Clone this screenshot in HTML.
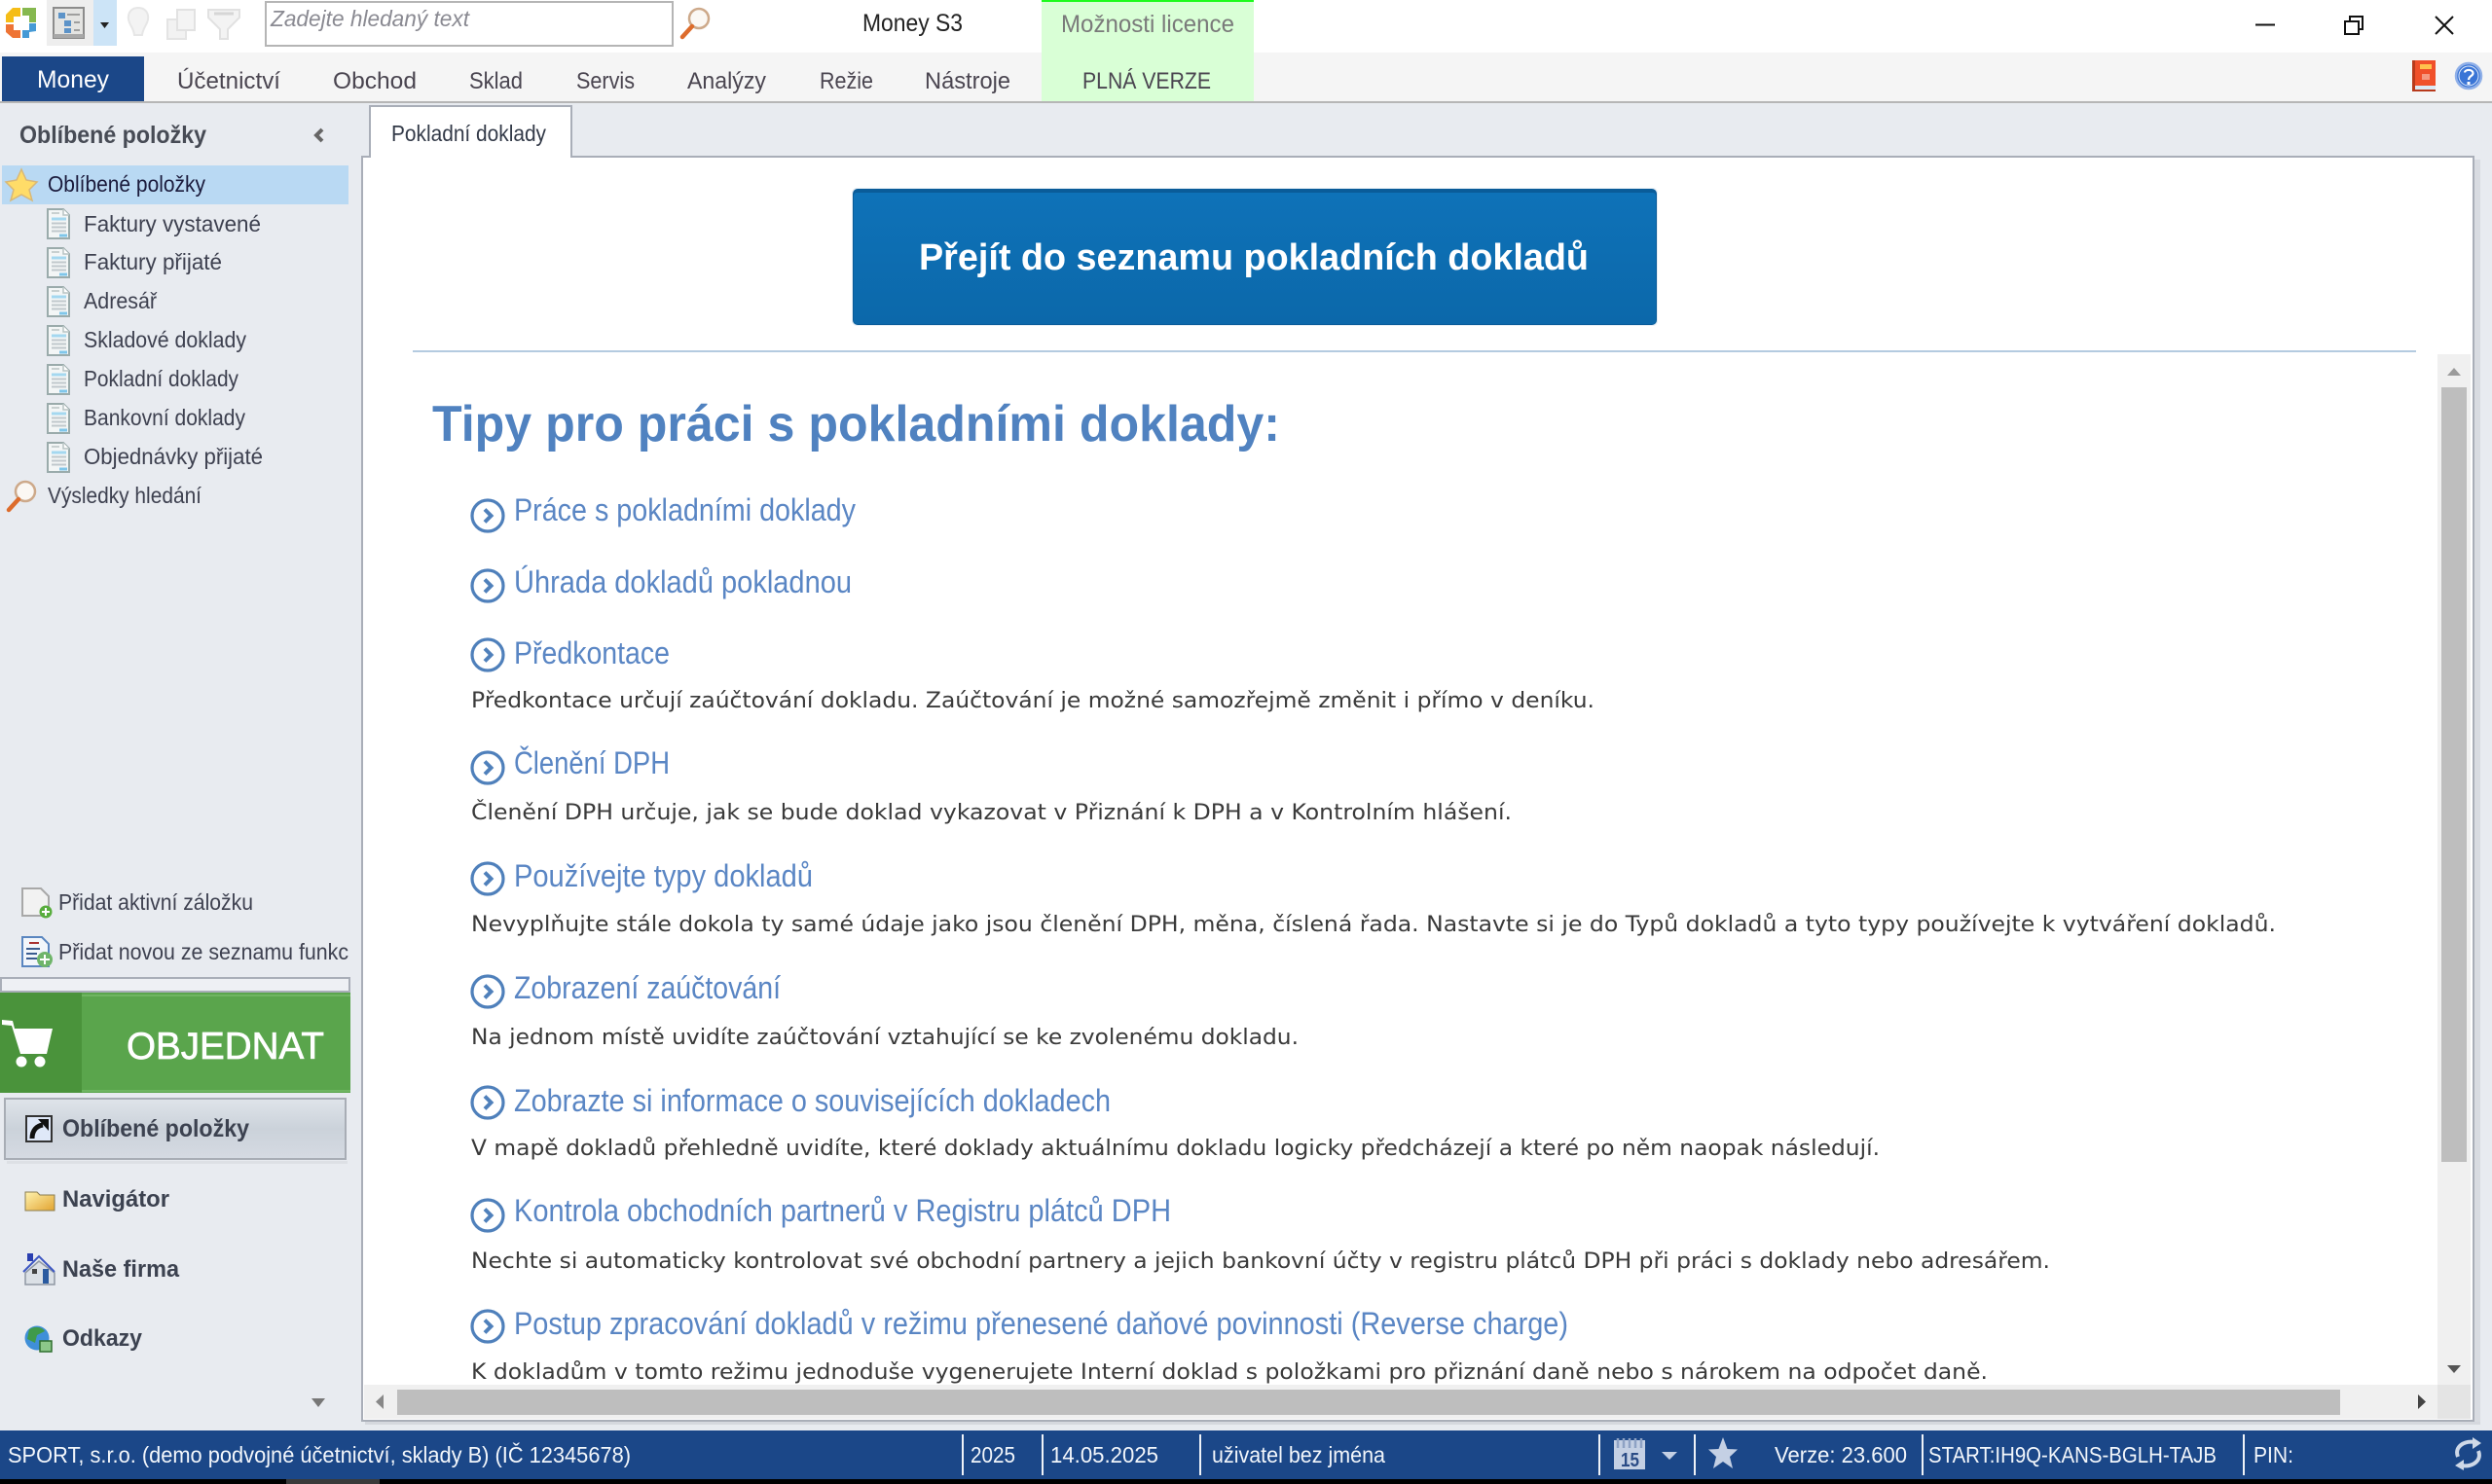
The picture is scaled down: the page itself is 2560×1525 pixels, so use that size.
<!DOCTYPE html>
<html lang="cs">
<head>
<meta charset="utf-8">
<title>Money S3</title>
<style>
html,body{margin:0;padding:0;background:#e8ebf0;width:2560px;height:1525px;overflow:hidden}
svg{display:block}
text{font-family:"Liberation Sans","DejaVu Sans",sans-serif;font-size:23px;fill:#3e4150}
.txt{filter:blur(.35px)}
.b{font-weight:bold}
.m{font-size:24px;fill:#4a4550}
.s{fill:#f2f6fb;font-size:23px}
.l{font-size:32px;fill:#5a86c4}
.d{font-family:"DejaVu Sans","Liberation Sans",sans-serif;font-size:22px;fill:#3a3a3a}
</style>
</head>
<body>
<svg xmlns="http://www.w3.org/2000/svg" width="2560" height="1525" viewBox="0 0 2560 1525">
<defs>
<symbol id="doc" viewBox="0 0 24 32"><path d="M1 1H17L23 7V31H1Z" fill="#f3f6f6" stroke="#9aabab" stroke-width="2"/><path d="M17 1V7H23" fill="#fff" stroke="#b8c4c4" stroke-width="1.5"/><path d="M5 5H13" stroke="#c8d0d0" stroke-width="2"/><path d="M5 11H20" stroke="#a4d8f0" stroke-width="3"/><path d="M5 15.500H20M5 19.500H20M5 23.500H20" stroke="#c0c8cc" stroke-width="2"/><path d="M13 28H21" stroke="#7fc6ea" stroke-width="3"/></symbol>
<symbol id="mag" viewBox="0 0 32 34"><circle cx="20" cy="12" r="10" fill="#fbf8f4" stroke="#cda98a" stroke-width="2.500"/><path d="M13 20L3 31" stroke="#dd6c2c" stroke-width="4.500" stroke-linecap="round"/></symbol>
<g id="go"><circle r="16" fill="#fff" stroke="#4f80bb" stroke-width="3.200"/><path d="M-3-6.500L3.500 0L-3 6.500" fill="none" stroke="#4f80bb" stroke-width="4"/></g>
<linearGradient id="btn" x1="0" y1="0" x2="0" y2="1"><stop offset="0" stop-color="#dfe4ea"/><stop offset=".5" stop-color="#cbd2da"/><stop offset="1" stop-color="#d5dae2"/></linearGradient>
<linearGradient id="fold" x1="0" y1="0" x2="1" y2="1"><stop offset="0" stop-color="#fff3b0"/><stop offset="1" stop-color="#e2a430"/></linearGradient>
<linearGradient id="blue" x1="0" y1="0" x2="0" y2="1"><stop offset="0" stop-color="#0e72b8"/><stop offset="1" stop-color="#0c68aa"/></linearGradient>
<clipPath id="sideclip"><rect x="0" y="950" width="358" height="50"/></clipPath>
</defs>

<!-- base -->
<rect width="2560" height="1525" fill="#e8ebf0"/>
<rect width="2560" height="54" fill="#fff"/>
<rect y="54" width="2560" height="50" fill="#f5f5f5"/>
<rect y="104" width="2560" height="2" fill="#b6b6b6"/>
<rect x="1070" y="0" width="218" height="104" fill="#d9ffd6"/>
<rect x="1070" y="0" width="218" height="2" fill="#1dfb1d"/>
<rect x="2" y="58" width="146" height="46" fill="#1b4788"/>

<!-- toolbar icons -->
<g>
<path d="M6 23H14V17H21V8H13L6 15Z" fill="#f5bd17"/>
<path d="M23 8H37V23H30V16H23Z" fill="#86b84f"/>
<path d="M6 25H14V31H21V39H13L6 33Z" fill="#ee7435"/>
<path d="M30 24H37V32L30 33V39H23V31H30Z" fill="#459ad6"/>
</g>
<rect x="48" y="0" width="48" height="47" fill="#eeeeee"/>
<rect x="96" y="0" width="24" height="47" fill="#cce4f7"/>
<rect x="55" y="8" width="31" height="31" fill="#e4e4e2" stroke="#8c8c8c" stroke-width="2"/>
<rect x="55" y="35" width="31" height="4" fill="#a8a8a8"/>
<g fill="#5c93c8"><rect x="60" y="13" width="7" height="6"/><rect x="66" y="21" width="7" height="6"/><rect x="66" y="29" width="7" height="5"/></g>
<path d="M69 15H82M76 23H82M76 31H82" stroke="#888" stroke-width="1.500"/>
<path d="M103 23H112L107.500 29Z" fill="#222"/>
<g opacity=".85">
<path d="M142 8C135 8 131 13 132 20C133 26 137 28 138 36H146C147 28 151 26 152 20C153 13 149 8 142 8Z" fill="#f2f2f2" stroke="#e2e2e2" stroke-width="2"/>
<rect x="172" y="20" width="19" height="20" fill="#f0f0f0" stroke="#e0e0e0" stroke-width="2"/>
<rect x="182" y="10" width="18" height="21" fill="#f3f3f3" stroke="#dedede" stroke-width="2"/>
<path d="M214 10H246V18L234 30V40H226V30L214 18Z" fill="#f2f2f2" stroke="#dcdcdc" stroke-width="2"/>
<path d="M220 14H240" stroke="#cfcfcf" stroke-width="3"/>
</g>
<rect x="273" y="2" width="418" height="45" fill="#fff" stroke="#b5b5b5" stroke-width="2"/>
<use href="#mag" x="698" y="7" width="32" height="34"/>

<!-- window controls -->
<path d="M2317 25.500H2337" stroke="#111" stroke-width="2"/>
<path d="M2409 22H2423V35H2409Z" fill="none" stroke="#111" stroke-width="2"/>
<path d="M2414 21V17H2427V30H2423" fill="none" stroke="#111" stroke-width="2"/>
<path d="M2502 17L2520 35M2520 17L2502 35" stroke="#111" stroke-width="2"/>
<!-- book / help -->
<rect x="2478" y="62" width="24" height="32" fill="#f0502a"/>
<rect x="2478" y="62" width="3" height="32" fill="#b83a1c"/>
<rect x="2486" y="66" width="12" height="5" fill="#ffc24d"/>
<rect x="2488" y="76" width="8" height="6" fill="#f59a80"/>
<rect x="2481" y="88" width="21" height="4" fill="#dbe9f5"/>
<rect x="2481" y="92" width="21" height="2" fill="#b83a1c"/>
<circle cx="2536" cy="78" r="13" fill="#3a75d6" stroke="#90b0e8" stroke-width="2.500"/>
<circle cx="2536" cy="78" r="10" fill="none" stroke="#dfe9f8" stroke-width="1"/>
<path d="M2532 74.500C2532.500 71 2540 71 2540.500 75C2541 78 2536 78 2536 82" fill="none" stroke="#fff" stroke-width="2.200"/>
<rect x="2534.500" y="84" width="3" height="3" fill="#fff"/>

<!-- tab & content frame -->
<rect x="371" y="160" width="2171" height="1301" fill="#a9aeb8"/>
<rect x="373" y="162" width="2167" height="1297" fill="#fff"/>
<rect x="2542" y="164" width="6" height="1299" fill="#d8dbe1"/>
<rect x="375" y="1461" width="2173" height="3" fill="#d5d8de"/>
<rect x="379" y="108" width="209" height="54" fill="#a9aeb8"/>
<rect x="381" y="110" width="205" height="52" fill="#fff"/>

<!-- blue button -->
<rect x="875" y="193" width="828" height="142" rx="5" fill="#e6eef5"/>
<rect x="876" y="194" width="826" height="140" rx="5" fill="#0a5c99"/>
<rect x="877" y="198" width="824" height="135" rx="3" fill="url(#blue)"/>

<!-- hr -->
<rect x="424" y="360" width="2058" height="2" fill="#b4cbe0"/>

<!-- scrollbars -->
<rect x="2504" y="364" width="34" height="1059" fill="#f0f0f0"/>
<rect x="2508" y="398" width="26" height="796" fill="#bebebe"/>
<path d="M2521 378L2528 386H2514Z" fill="#9b9b9b"/>
<path d="M2514 1403H2528L2521 1411Z" fill="#555"/>
<rect x="374" y="1423" width="2130" height="35" fill="#f0f0f0"/>
<rect x="408" y="1428" width="1996" height="26" fill="#bebebe"/>
<rect x="2504" y="1423" width="34" height="35" fill="#e4e4e4"/>
<path d="M394 1433V1448L386 1440.500Z" fill="#888"/>
<path d="M2484 1433V1448L2492 1440.500Z" fill="#444"/>

<!-- sidebar -->
<path d="M331 133L325 139L331 145" fill="none" stroke="#666" stroke-width="4"/>
<rect x="2" y="170" width="356" height="40" fill="#b9d9f3"/>
<path d="M22 174L27 185L38 187L30 195L33 206L22 200L11 206L14 195L6 187L17 185Z" fill="#ffdc68" stroke="#d8b878" stroke-width="1.500"/>
<use href="#doc" x="48" y="214" width="24" height="32"/>
<use href="#doc" x="48" y="254" width="24" height="32"/>
<use href="#doc" x="48" y="294" width="24" height="32"/>
<use href="#doc" x="48" y="334" width="24" height="32"/>
<use href="#doc" x="48" y="374" width="24" height="32"/>
<use href="#doc" x="48" y="414" width="24" height="32"/>
<use href="#doc" x="48" y="454" width="24" height="32"/>
<use href="#mag" x="6" y="493" width="32" height="34"/>

<!-- add icons -->
<path d="M23 913H42L50 921V941H23Z" fill="#f2f2f2" stroke="#a8a8a8" stroke-width="2"/>
<circle cx="47" cy="937" r="6.500" fill="#58ad3d"/>
<path d="M43 937H51M47 933V941" stroke="#fff" stroke-width="2"/>
<path d="M23 963H43L50 970V993H23Z" fill="#f2f6fb" stroke="#5a86c0" stroke-width="2"/>
<path d="M30 969H40" stroke="#a83030" stroke-width="2"/>
<path d="M27 975H41M27 980H38M27 985H38" stroke="#3a5c90" stroke-width="2"/>
<circle cx="46" cy="986" r="8" fill="#6fb56a"/>
<path d="M41 986H51M46 981V991" stroke="#fff" stroke-width="2"/>

<!-- splitter -->
<rect x="1" y="1005" width="358" height="14" fill="#eef0f4" stroke="#a9aeb8" stroke-width="2"/>

<!-- objednat -->
<rect x="0" y="1020" width="360" height="103" fill="#5aa54c"/>
<rect x="0" y="1020" width="84" height="103" fill="#4a933b"/>
<rect x="84" y="1022" width="276" height="2" fill="#6fb561"/>
<rect x="84" y="1120" width="276" height="2" fill="#6fb561"/>
<path d="M2 1048L13 1049L15 1057H54L48 1083H21L12 1054L2 1053Z" fill="#fff"/>
<circle cx="22" cy="1091" r="5.500" fill="#fff"/>
<circle cx="41" cy="1091" r="5.500" fill="#fff"/>

<!-- nav buttons -->
<rect x="5" y="1129" width="350" height="62" fill="url(#btn)" stroke="#a8adb5" stroke-width="2"/>
<rect x="7" y="1193" width="350" height="3" fill="#dde0e5"/>
<rect x="27" y="1147" width="26" height="26" fill="#dfe8f8" stroke="#333" stroke-width="2"/>
<path d="M33 1170C33 1161 38 1157 44 1156" fill="none" stroke="#111" stroke-width="5"/>
<path d="M39 1150L50 1150L50 1162Z" fill="#111"/>
<path d="M26 1225H38L41 1228H56V1244H26Z" fill="url(#fold)" stroke="#8a7c50" stroke-width="1"/>
<path d="M40 1296L56 1308V1320H26V1308Z" fill="#dbe0e6" stroke="#8f98a4" stroke-width="1.500"/>
<path d="M24 1307L40 1291L56 1307" fill="none" stroke="#3d57c2" stroke-width="2"/>
<rect x="28" y="1288" width="6" height="8" fill="#2a3fb0"/>
<rect x="33" y="1304" width="5" height="5" fill="#444"/>
<rect x="44" y="1304" width="6" height="15" fill="#2a5aa0"/>
<circle cx="38" cy="1375" r="12.500" fill="#3f8fd8"/>
<path d="M30 1366C36 1362 44 1364 46 1368L38 1372L36 1380L28 1376Z" fill="#3f9a4a"/>
<rect x="41" y="1378" width="12" height="11" fill="#8cc78a" stroke="#2e6f2e" stroke-width="1.500"/>
<path d="M320 1437H334L327 1446Z" fill="#777"/>

<!-- status bar -->
<rect y="1470" width="2560" height="50" fill="#1b4788"/>
<rect y="1520" width="2560" height="5" fill="#000"/>
<rect x="294" y="1520" width="96" height="5" fill="#3a3a3a"/>
<g fill="#eef2f8">
<rect x="988" y="1474" width="2" height="42"/><rect x="1070" y="1474" width="2" height="42"/><rect x="1232" y="1474" width="2" height="42"/><rect x="1642" y="1474" width="2" height="42"/><rect x="1740" y="1474" width="2" height="42"/><rect x="1974" y="1474" width="2" height="42"/><rect x="2304" y="1474" width="2" height="42"/>
</g>
<rect x="1658" y="1480" width="32" height="30" fill="#c4d0e4"/>
<path d="M1662 1478V1488M1668 1478V1488M1674 1478V1488M1680 1478V1488M1686 1478V1488" stroke="#8ea2c4" stroke-width="2.500"/>
<path d="M1707 1492H1723L1715 1500Z" fill="#c4d0e4"/>
<path d="M1770 1477L1774.500 1489L1785 1489.500L1777 1497L1780 1509L1770 1502L1760 1509L1763 1497L1755 1489.500L1765.500 1489Z" fill="#c4d0e4"/>
<path d="M2525 1497C2521 1487 2531 1480 2543 1482" fill="none" stroke="#cfd9e8" stroke-width="4"/>
<path d="M2540 1477L2549 1483L2540 1489Z" fill="#cfd9e8"/>
<path d="M2546 1491C2550 1501 2540 1508 2528 1506" fill="none" stroke="#cfd9e8" stroke-width="4"/>
<path d="M2531 1500L2522 1506L2531 1511Z" fill="#cfd9e8"/>

<!-- TEXT -->
<g class="txt">
<text x="278" y="27" textLength="204" lengthAdjust="spacingAndGlyphs" style="font-style:italic;fill:#8a8a92">Zadejte hledaný text</text>
<text x="886" y="32" textLength="103" lengthAdjust="spacingAndGlyphs" style="font-size:25px;fill:#222">Money S3</text>
<text x="1090" y="33" textLength="178" lengthAdjust="spacingAndGlyphs" style="font-size:25px;fill:#7a7a7a">Možnosti licence</text>

<text x="38" y="90" textLength="74" lengthAdjust="spacingAndGlyphs" class="m" style="fill:#fff;font-size:25px">Money</text>
<text x="182" y="91" textLength="106" lengthAdjust="spacingAndGlyphs" class="m">Účetnictví</text>
<text x="342" y="91" textLength="86" lengthAdjust="spacingAndGlyphs" class="m">Obchod</text>
<text x="482" y="91" textLength="55" lengthAdjust="spacingAndGlyphs" class="m">Sklad</text>
<text x="592" y="91" textLength="60" lengthAdjust="spacingAndGlyphs" class="m">Servis</text>
<text x="706" y="91" textLength="81" lengthAdjust="spacingAndGlyphs" class="m">Analýzy</text>
<text x="842" y="91" textLength="55" lengthAdjust="spacingAndGlyphs" class="m">Režie</text>
<text x="950" y="91" textLength="88" lengthAdjust="spacingAndGlyphs" class="m">Nástroje</text>
<text x="1112" y="91" textLength="132" lengthAdjust="spacingAndGlyphs" class="m">PLNÁ VERZE</text>

<text x="20" y="147" textLength="192" lengthAdjust="spacingAndGlyphs" class="b" style="font-size:25px;fill:#474b55">Oblíbené položky</text>
<text x="402" y="145" textLength="159" lengthAdjust="spacingAndGlyphs" style="fill:#333a48">Pokladní doklady</text>

<text x="49" y="197" textLength="162" lengthAdjust="spacingAndGlyphs" style="fill:#1b1b3c">Oblíbené položky</text>
<text x="86" y="238" textLength="182" lengthAdjust="spacingAndGlyphs">Faktury vystavené</text>
<text x="86" y="277" textLength="142" lengthAdjust="spacingAndGlyphs">Faktury přijaté</text>
<text x="86" y="317" textLength="75" lengthAdjust="spacingAndGlyphs">Adresář</text>
<text x="86" y="357" textLength="167" lengthAdjust="spacingAndGlyphs">Skladové doklady</text>
<text x="86" y="397" textLength="159" lengthAdjust="spacingAndGlyphs">Pokladní doklady</text>
<text x="86" y="437" textLength="166" lengthAdjust="spacingAndGlyphs">Bankovní doklady</text>
<text x="86" y="477" textLength="184" lengthAdjust="spacingAndGlyphs">Objednávky přijaté</text>
<text x="49" y="517" textLength="158" lengthAdjust="spacingAndGlyphs">Výsledky hledání</text>

<text x="60" y="935" textLength="200" lengthAdjust="spacingAndGlyphs">Přidat aktivní záložku</text>
<g clip-path="url(#sideclip)"><text x="60" y="986" textLength="298" lengthAdjust="spacingAndGlyphs">Přidat novou ze seznamu funkc</text></g>
<text x="130" y="1088" textLength="203" lengthAdjust="spacingAndGlyphs" style="font-size:39px;fill:#fff;stroke:#fff;stroke-width:.7px">OBJEDNAT</text>
<text x="64" y="1168" textLength="192" lengthAdjust="spacingAndGlyphs" class="b" style="font-size:25px;fill:#3c4250">Oblíbené položky</text>
<text x="64" y="1240" textLength="110" lengthAdjust="spacingAndGlyphs" class="b" style="font-size:24px;fill:#3c4250">Navigátor</text>
<text x="64" y="1312" textLength="120" lengthAdjust="spacingAndGlyphs" class="b" style="font-size:24px;fill:#3c4250">Naše firma</text>
<text x="64" y="1383" textLength="82" lengthAdjust="spacingAndGlyphs" class="b" style="font-size:24px;fill:#3c4250">Odkazy</text>

<text x="944" y="277" textLength="688" lengthAdjust="spacingAndGlyphs" class="b" style="font-size:38px;fill:#fff">Přejít do seznamu pokladních dokladů</text>
<text x="444" y="453" textLength="871" lengthAdjust="spacingAndGlyphs" class="b" style="font-size:52px;fill:#5082c0">Tipy pro práci s pokladními doklady:</text>

<text x="528" y="535" textLength="351" lengthAdjust="spacingAndGlyphs" class="l">Práce s pokladními doklady</text>
<text x="528" y="609" textLength="347" lengthAdjust="spacingAndGlyphs" class="l">Úhrada dokladů pokladnou</text>
<text x="528" y="682" textLength="160" lengthAdjust="spacingAndGlyphs" class="l">Předkontace</text>
<text x="528" y="795" textLength="160" lengthAdjust="spacingAndGlyphs" class="l">Členění DPH</text>
<text x="528" y="911" textLength="307" lengthAdjust="spacingAndGlyphs" class="l">Používejte typy dokladů</text>
<text x="528" y="1026" textLength="274" lengthAdjust="spacingAndGlyphs" class="l">Zobrazení zaúčtování</text>
<text x="528" y="1142" textLength="613" lengthAdjust="spacingAndGlyphs" class="l">Zobrazte si informace o souvisejících dokladech</text>
<text x="528" y="1255" textLength="675" lengthAdjust="spacingAndGlyphs" class="l">Kontrola obchodních partnerů v Registru plátců DPH</text>
<text x="528" y="1371" textLength="1083" lengthAdjust="spacingAndGlyphs" class="l">Postup zpracování dokladů v režimu přenesené daňové povinnosti (Reverse charge)</text>

<text x="484" y="727" textLength="1154" lengthAdjust="spacingAndGlyphs" class="d">Předkontace určují zaúčtování dokladu. Zaúčtování je možné samozřejmě změnit i přímo v deníku.</text>
<text x="484" y="842" textLength="1069" lengthAdjust="spacingAndGlyphs" class="d">Členění DPH určuje, jak se bude doklad vykazovat v Přiznání k DPH a v Kontrolním hlášení.</text>
<text x="484" y="957" textLength="1854" lengthAdjust="spacingAndGlyphs" class="d">Nevyplňujte stále dokola ty samé údaje jako jsou členění DPH, měna, číslená řada. Nastavte si je do Typů dokladů a tyto typy používejte k vytváření dokladů.</text>
<text x="484" y="1073" textLength="850" lengthAdjust="spacingAndGlyphs" class="d">Na jednom místě uvidíte zaúčtování vztahující se ke zvolenému dokladu.</text>
<text x="484" y="1187" textLength="1447" lengthAdjust="spacingAndGlyphs" class="d">V mapě dokladů přehledně uvidíte, které doklady aktuálnímu dokladu logicky předcházejí a které po něm naopak následují.</text>
<text x="484" y="1303" textLength="1622" lengthAdjust="spacingAndGlyphs" class="d">Nechte si automaticky kontrolovat své obchodní partnery a jejich bankovní účty v registru plátců DPH při práci s doklady nebo adresářem.</text>
<text x="484" y="1417" textLength="1558" lengthAdjust="spacingAndGlyphs" class="d">K dokladům v tomto režimu jednoduše vygenerujete Interní doklad s položkami pro přiznání daně nebo s nárokem na odpočet daně.</text>

<text x="8" y="1503" textLength="640" lengthAdjust="spacingAndGlyphs" class="s">SPORT, s.r.o. (demo podvojné účetnictví, sklady B) (IČ 12345678)</text>
<text x="997" y="1503" textLength="46" lengthAdjust="spacingAndGlyphs" class="s">2025</text>
<text x="1079" y="1503" textLength="111" lengthAdjust="spacingAndGlyphs" class="s">14.05.2025</text>
<text x="1245" y="1503" textLength="178" lengthAdjust="spacingAndGlyphs" class="s">uživatel bez jména</text>
<text x="1823" y="1503" textLength="136" lengthAdjust="spacingAndGlyphs" class="s">Verze: 23.600</text>
<text x="1981" y="1503" textLength="296" lengthAdjust="spacingAndGlyphs" class="s">START:IH9Q-KANS-BGLH-TAJB</text>
<text x="2315" y="1503" textLength="41" lengthAdjust="spacingAndGlyphs" class="s">PIN:</text>
<text x="1665" y="1507" textLength="19" lengthAdjust="spacingAndGlyphs" class="b" style="font-size:20px;fill:#2b4c86">15</text>
</g>

<use href="#go" x="501" y="530"/>
<use href="#go" x="501" y="602"/>
<use href="#go" x="501" y="673"/>
<use href="#go" x="501" y="789"/>
<use href="#go" x="501" y="903"/>
<use href="#go" x="501" y="1019"/>
<use href="#go" x="501" y="1133"/>
<use href="#go" x="501" y="1249"/>
<use href="#go" x="501" y="1363"/>
</svg>
</body>
</html>
